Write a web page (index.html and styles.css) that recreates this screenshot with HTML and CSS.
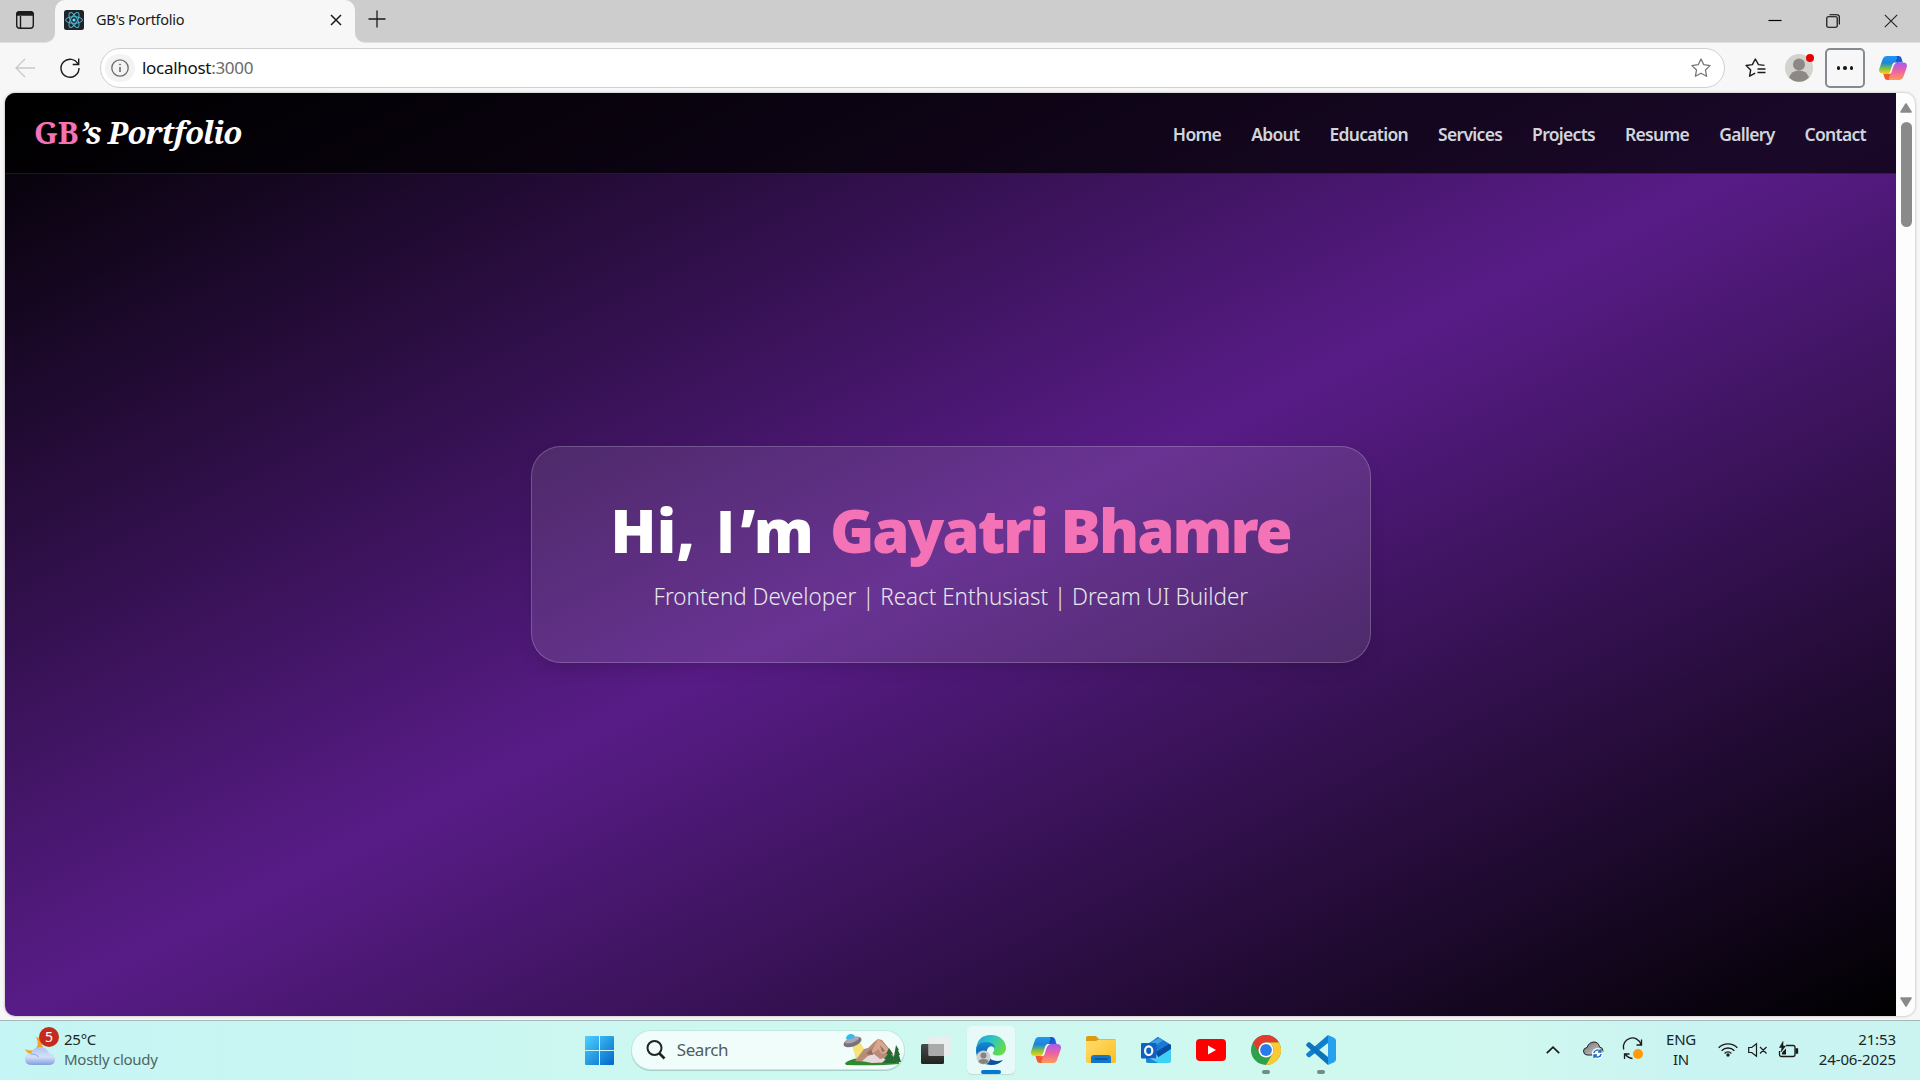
FILE: index.html
```html
<!DOCTYPE html>
<html lang="en">
<head>
<meta charset="utf-8">
<title>GB's Portfolio</title>
<link rel="stylesheet" href="styles.css">
</head>
<body>
<svg width="0" height="0" class="defs" aria-hidden="true">
  <defs>
    <linearGradient id="cpA" x1="0" y1="0" x2="0" y2="1"><stop offset="0" stop-color="#2196f3"/><stop offset=".4" stop-color="#1b86d8"/><stop offset=".7" stop-color="#7cc04b"/><stop offset="1" stop-color="#f5d210"/></linearGradient>
    <linearGradient id="cpB" x1="0" y1="0" x2="0" y2="1"><stop offset="0" stop-color="#a35cf0"/><stop offset=".45" stop-color="#e860a8"/><stop offset="1" stop-color="#ff9a55"/></linearGradient>
    <linearGradient id="cpC" x1="0" y1="0" x2="1" y2="1"><stop offset="0" stop-color="#1a3fc4"/><stop offset="1" stop-color="#1b6fe0"/></linearGradient>
    <linearGradient id="win" gradientUnits="userSpaceOnUse" x1="0" y1="0" x2="29" y2="29"><stop offset="0" stop-color="#4fd0ff"/><stop offset="1" stop-color="#0067c8"/></linearGradient>
    <linearGradient id="edA" x1="0" y1="0" x2="1" y2=".5"><stop offset="0" stop-color="#1b9de2"/><stop offset=".5" stop-color="#2fc3c4"/><stop offset="1" stop-color="#62dc4c"/></linearGradient>
    <linearGradient id="edB" x1="0" y1="0" x2="0" y2="1"><stop offset="0" stop-color="#1488d8"/><stop offset="1" stop-color="#0c4a94"/></linearGradient>
    <linearGradient id="fold" x1="0" y1="0" x2="1" y2="1"><stop offset="0" stop-color="#ffdc72"/><stop offset="1" stop-color="#fcbe1e"/></linearGradient>
    <linearGradient id="cloudG" x1="0" y1="0" x2="0" y2="1"><stop offset="0" stop-color="#a9c4f5"/><stop offset=".55" stop-color="#d5e0f6"/><stop offset="1" stop-color="#7f9fe0"/></linearGradient>
    <linearGradient id="tvA" x1="0" y1="0" x2="0" y2="1"><stop offset="0" stop-color="#4a4a48"/><stop offset="1" stop-color="#222"/></linearGradient>
    <linearGradient id="grayC" x1="0" y1="0" x2="1" y2="1"><stop offset="0" stop-color="#6f6f6f"/><stop offset="1" stop-color="#d8d8d8"/></linearGradient>
    <symbol id="copilot" viewBox="0 0 30 28">
      <path d="M17 1h4q2.500 0 3.200 2.500L25.500 8h-4q-2.500 0-3.200 2.500L14 7z" fill="url(#cpC)"/>
      <path d="M13 27H9q-2.500 0-3.200-2.500L4.500 20h4q2.500 0 3.200-2.500L16 21z" fill="#f4582c"/>
      <path d="M8 1h10q2 0 1.600 2-.6 1-1.200 3l-3.600 11q-1 3-4.300 3H4Q0 20 0 16.500q0-1 .5-2.500L4 4q1-3 4-3z" fill="url(#cpA)"/>
      <path d="M22 27H12q-2 0-1.600-2 .6-1 1.200-3l3.600-11q1-3 4.300-3H26q4 0 4 3.500 0 1-.5 2.500L26 24q-1 3-4 3z" fill="url(#cpB)"/>
      <path d="M16.500 8h3q-3 .8-4 4L13.500 18.500q-.6 1.800-2.500 1.800h-1.500q1.800-.5 2.500-2.800l2.200-7q.8-2.500 2.300-2.500z" fill="#fff" opacity=".9"/>
    </symbol>
  </defs>
</svg>

<div class="desktop">
  <header class="tabstrip">
    <div class="tab-actions">
      <svg width="20" height="20" viewBox="0 0 20 20" fill="none" stroke="#1b1b1b" stroke-width="1.400"><rect x="1.700" y="1.700" width="16.600" height="16.600" rx="3"/><path d="M5.500 6v12"/><path d="M2 5V4q0-2 2-2h12q2 0 2 2v1z" fill="#1b1b1b"/></svg>
    </div>
    <div class="tab">
      <svg width="20" height="20" viewBox="0 0 20 20"><rect width="20" height="20" rx="2.500" fill="#20232a"/><g fill="none" stroke="#4fb9d3" stroke-width="1"><ellipse cx="10" cy="10" rx="8.400" ry="3.300"/><ellipse cx="10" cy="10" rx="8.400" ry="3.300" transform="rotate(60 10 10)"/><ellipse cx="10" cy="10" rx="8.400" ry="3.300" transform="rotate(120 10 10)"/></g><circle cx="10" cy="10" r="1.600" fill="#61dafb"/></svg>
      <span class="tab-title">GB's Portfolio</span>
      <svg class="tab-close" width="12" height="12" viewBox="0 0 12 12" stroke="#1b1b1b" stroke-width="1.500"><path d="M1 1l10 10M11 1L1 11"/></svg>
    </div>
    <svg class="new-tab" width="18" height="18" viewBox="0 0 18 18" stroke="#1b1b1b" stroke-width="1.300"><path d="M9 .5v17M.5 9h17"/></svg>
    <div class="window-controls">
      <svg width="14" height="14" viewBox="0 0 14 14" stroke="#000" stroke-width="1.200"><path d="M.5 6.500h13"/></svg>
      <svg width="14" height="14" viewBox="0 0 14 14" fill="none" stroke="#000" stroke-width="1.100"><rect x=".8" y="2.800" width="10.400" height="10.400" rx="1.200"/><path d="M3.500.8H11q2.300 0 2.300 2.300v7.500"/></svg>
      <svg width="14" height="14" viewBox="0 0 14 14" stroke="#222" stroke-width="1.100"><path d="M.8.8l12.400 12.400M13.200.8L.8 13.200"/></svg>
    </div>
  </header>

  <div class="toolbar">
    <svg class="back" width="20" height="20" viewBox="0 0 20 20" fill="none" stroke="#c9c9c9" stroke-width="1.300"><path d="M20 10H1M10 1L1 10l9 9"/></svg>
    <svg class="reload" width="20" height="20" viewBox="0 0 20 20" fill="none" stroke="#1b1b1b" stroke-width="1.400"><path d="M18.200 6.500A9 9 0 1 0 19 10M18.700.5v6h-6"/></svg>
    <div class="address">
      <span class="site-info"><svg width="18" height="18" viewBox="0 0 18 18" fill="none" stroke="#6b6b6b" stroke-width="1.300"><circle cx="9" cy="9" r="8.200"/><path d="M9 8v5" stroke-width="1.600"/><circle cx="9" cy="5.500" r=".6" fill="#6b6b6b" stroke-width=".8"/></svg></span>
      <span class="url">localhost<span class="port">:3000</span></span>
      <svg class="star" width="20" height="20" viewBox="0 0 20 20" fill="none" stroke="#757575" stroke-width="1.300" stroke-linejoin="round"><path d="M10 1l2.800 5.700 6.300.9-4.600 4.400 1.100 6.300-5.600-3-5.600 3L5.500 12 .9 7.600l6.300-.9z"/></svg>
    </div>
    <svg class="favorites" width="21" height="20" viewBox="0 0 21 20" fill="none" stroke="#1b1b1b" stroke-width="1.400" stroke-linejoin="round"><path d="M19.500 7.400l-6-.8L10.300 1 7.400 6.600l-6.300.9 4.600 4.400-1.100 6.300 5.600-3"/><path d="M12.500 11h8M12.500 14.500h8"/></svg>
    <div class="profile">
      <svg width="28" height="28" viewBox="0 0 28 28"><circle cx="14" cy="14" r="14" fill="#d4d2ce"/><circle cx="14" cy="10.500" r="6" fill="#8b8885"/><path d="M4 23.500a10.500 10 0 0 1 20 0 14 14 0 0 1-20 0z" fill="#8b8885"/></svg>
      <span class="profile-dot"></span>
    </div>
    <div class="more"><i></i><i></i><i></i></div>
    <svg class="copilot-btn" width="28" height="26"><use href="#copilot"/></svg>
  </div>

  <main class="viewport">
    <div class="page">
      <nav class="navbar">
        <div class="logo"><span class="initials">GB</span><em>’s Portfolio</em></div>
        <ul class="links"><li>Home</li><li>About</li><li>Education</li><li>Services</li><li>Projects</li><li>Resume</li><li>Gallery</li><li>Contact</li></ul>
      </nav>
      <section class="hero">
        <div class="card">
          <h1>Hi, <b class="plain-i">I</b>’m <span>Gayatri Bhamre</span></h1>
          <p>Frontend Developer | React Enthusiast | Dream UI Builder</p>
        </div>
      </section>
    </div>
    <div class="scrollbar">
      <svg width="12" height="10" viewBox="0 0 12 10"><path d="M6 1l5 8H1z" fill="#8a8a8a" stroke="#8a8a8a" stroke-width="1.600" stroke-linejoin="round"/></svg>
      <div class="thumb"></div>
      <svg class="down" width="12" height="10" viewBox="0 0 12 10"><path d="M6 9l5-8H1z" fill="#8a8a8a" stroke="#8a8a8a" stroke-width="1.600" stroke-linejoin="round"/></svg>
    </div>
  </main>

  <footer class="taskbar">
    <div class="weather">
      <div class="weather-icon">
        <svg width="32" height="32" viewBox="0 0 32 32"><path d="M12 3q4 8-1 12-4 3-10 0 2 5 7 5l12-3-4-13z" fill="#f6a321"/><path d="M8 31q-7 0-7-6 0-5 6-5.500Q10 13 16 13q7 0 9 6.500 6 .5 6 6 0 5.500-7 5.500z" fill="url(#cloudG)"/><path d="M7 20q5-.5 8 3" fill="none" stroke="#8aa7e6"/></svg>
        <span class="badge">5</span>
      </div>
      <div class="weather-text"><span>25°C</span><span class="condition">Mostly cloudy</span></div>
    </div>

    <div class="apps">
      <div class="app"><svg width="29" height="29" viewBox="0 0 29 29" fill="url(#win)"><path d="M1 0h13v14H0V1q0-1 1-1zM15 0h13q1 0 1 1v13H15zM0 15h14v14H1q-1 0-1-1zM15 15h14v13q0 1-1 1H15z"/></svg></div>
      <div class="search">
        <svg width="20" height="20" viewBox="0 0 20 20" fill="none" stroke="#222" stroke-width="2"><circle cx="8.500" cy="8" r="7"/><path d="M13.500 13.500l5 5" stroke-width="2.600"/></svg>
        <span>Search</span>
        <svg class="scene" width="58" height="32" viewBox="0 0 58 32">
          <path d="M9 11l8-3 7 12-11 5z" fill="#f5e27a"/>
          <path d="M2 29q8-6 18-4 14-3 36 3v2q-20 2-53 1z" fill="#2f8a2f"/>
          <path d="M12 27l9-12 4-1 6-6 4-3 4 1 9 11 6 10-16 2z" fill="#b98c75"/>
          <path d="M35 5l4 3 7 8 5 8-8-5-4 1-4-5-3 3-4 1 4-8z" fill="#d8a78d"/>
          <path d="M19 27l6-5 6-2 6 5 4-1 3 4-15 1z" fill="#e6d8dc"/>
          <path d="M30 21l-2-6-5 5zM39 18l-2-7 5 6z" fill="#8a6f6c"/>
          <path d="M46 14l4 6h-2l4 5h-2l3 4H39l4-4h-2l4-5h-2zM53 11l3 5h-1l2 5h-1l2 7h-8z" fill="#226b35"/>
          <ellipse cx="9.500" cy="8" rx="9.500" ry="4.400" transform="rotate(-20 9.500 8)" fill="#77727f"/>
          <ellipse cx="9" cy="6" rx="7.500" ry="2.600" transform="rotate(-20 9 6)" fill="#aaa5b2"/>
          <path d="M3 5q0-4 4-5 4-.5 5 3-5 3-9 2z" fill="#39b7f0"/>
        </svg>
      </div>
      <div class="app"><svg width="30" height="28" viewBox="0 0 30 28"><rect y="8" width="23" height="20" rx="1.500" fill="url(#tvA)"/><rect x="7.500" y=".5" width="22" height="19.500" rx="1" fill="#ececec" opacity=".96"/><path d="M8 8h15v12H8z" fill="#aaa"/></svg></div>
      <div class="app active"><svg width="30" height="30" viewBox="0 0 30 30">
        <path d="M0 15Q1 0 15 0c9 0 15 6 15 13 0 5-4 7.500-8 7.500-4 0-6-1.500-5-3 3-4 0-8-6-8-6 0-9.500 3-11 5.500z" fill="url(#edA)"/>
        <path d="M0 15q1-8 10-8 8 0 9 6-3-3-6-1-4 3-1 9 4 7 15 4-4 5-12 5Q0 29 0 15z" fill="url(#edB)"/>
        <circle cx="7.500" cy="22.500" r="7" fill="#d0cfcd"/><circle cx="7.500" cy="20.500" r="3" fill="#858280"/><path d="M2.500 27q0-3 5-3t5 3q-5 4-10 0z" fill="#858280"/></svg></div>
      <div class="app"><svg width="30" height="28"><use href="#copilot"/></svg></div>
      <div class="app"><svg width="30" height="28" viewBox="0 0 30 28"><path d="M0 2q0-2 2-2h7q1 0 2 1l2 2h15q2 0 2 2v4H0z" fill="#dc9a0c"/><path d="M0 6q0-1 1-1h9l3-1.500h16q1 0 1 1V25q0 2-2 2H2q-2 0-2-2z" fill="url(#fold)"/><path d="M5 27v-5q0-3 3-3h14q3 0 3 3v5z" fill="#1577c9"/><path d="M9 23h12" stroke="#0b4f96" stroke-width="1.500" stroke-linecap="round"/></svg></div>
      <div class="app"><svg width="30" height="28" viewBox="0 0 30 28"><path d="M5 9L17 1l13 8v10H5z" fill="#1f86db"/><path d="M14 3l3-2 13 8-15 9-6-4z" fill="#1a7ad2"/><path d="M18 2l4 2.500-12 8-3-4z" fill="#3f9fe6"/><path d="M15 16l13-8 2 1v5L17 22z" fill="#0b4ca3"/><path d="M30 13v12q0 2-2 2H7q-2 0-2-2l11-3z" fill="#3fd0f5"/><path d="M5 20l12 7H7q-2 0-2-2z" fill="#1c87d4"/><rect y="7" width="15.500" height="15.500" rx="1" fill="#0f62be"/><ellipse cx="7.700" cy="14.700" rx="3.600" ry="4.300" fill="none" stroke="#fff" stroke-width="2.200"/></svg></div>
      <div class="app"><svg width="30" height="22" viewBox="0 0 30 22"><rect width="30" height="22" rx="4" fill="#f00"/><path d="M12 6.500l8 4.500-8 4.500z" fill="#fff"/></svg></div>
      <div class="app running"><svg width="30" height="30" viewBox="0 0 30 30"><circle cx="15" cy="15" r="15" fill="#2fa04c"/><path d="M2 7.500A15 15 0 0 1 28 7.500H15a7.500 7.500 0 0 0-6.500 11.200z" fill="#e33b2e"/><path d="M28 7.500A15 15 0 0 1 15 30l6.500-11.200A7.500 7.500 0 0 0 21.500 11L15 7.500z" fill="#fcc934"/><circle cx="15" cy="15" r="7.500" fill="#fff"/><circle cx="15" cy="15" r="5.900" fill="#2a7bea"/></svg></div>
      <div class="app running"><svg width="30" height="30" viewBox="0 0 30 30"><path d="M22 0v8L4 22q-1 .8-2 0l-1.500-1.500q-1-1 0-2z" fill="#1180cc"/><path d="M22 30v-8L4 7.500q-1-.8-2 0L.5 9q-1 1 0 2z" fill="#0b74bd"/><path d="M22 0l6 2.800q2 1 2 3v18.400q0 2-2 3L22 30z" fill="#27a0f0"/></svg></div>
    </div>

    <div class="tray">
      <svg class="chevron" width="14" height="8" viewBox="0 0 14 8" fill="none" stroke="#1b1b1b" stroke-width="1.700"><path d="M.8 7.200L7 1.200l6.200 6"/></svg>
      <svg class="onedrive" width="21" height="18" viewBox="0 0 21 18"><path d="M4 14q-3.500-.5-3.500-4Q.5 7 4 6.500 6 1 11 1q4.500 0 5.500 5 3.500.5 3.500 4t-4 4z" fill="url(#grayC)" stroke="#222"/><circle cx="14.500" cy="12.500" r="5.500" fill="#fff"/><path d="M10.800 12a3.800 3.800 0 0 1 6.800-1.500M18.200 13a3.800 3.800 0 0 1-6.800 1.500M18 8v3h-3M11 17v-3h3" fill="none" stroke="#1669c1" stroke-width="1.300"/></svg>
      <svg class="sync" width="20" height="21" viewBox="0 0 20 21" fill="none" stroke="#1b1b1b" stroke-width="1.300"><path d="M.7 10.500A9 9 0 0 1 18 5.500M18.500.5v5.500h-5M1.500 20v-5h5M2 15q3 4 7.500 4.500"/><circle cx="15" cy="15" r="5" fill="#ff9b0a" stroke="none"/></svg>
      <div class="lang"><span>ENG</span><span>IN</span></div>
      <svg class="wifi" width="20" height="15" viewBox="0 0 20 15" fill="none" stroke="#1b1b1b" stroke-width="1.400"><path d="M.7 5.800a13 13 0 0 1 18.600 0M3.600 8.700a9 9 0 0 1 12.800 0M6.600 11.400a5 5 0 0 1 6.800 0"/><circle cx="10" cy="13" r="1.700" fill="#1b1b1b" stroke="none"/></svg>
      <svg class="volume" width="19" height="14" viewBox="0 0 19 14" fill="none" stroke="#1b1b1b" stroke-width="1.200"><path d="M.7 4.500h3L8.500.8v12.400L3.700 9.500h-3zM12 4l6.500 6.500M18.500 4L12 10.500"/></svg>
      <svg class="battery" width="20" height="17" viewBox="0 0 20 17" fill="none" stroke="#1b1b1b" stroke-width="1.300"><path d="M8 4.500h7q2 0 2 2v7q0 2-2 2H3.500q-2 0-2-2V10"/><path d="M18 8v4h1.500V8z" fill="#1b1b1b"/><path d="M5 .5L1.500 6.500H4l-1 4.500 4.500-6H5z" fill="#1b1b1b" stroke-width=".6"/><path d="M4 13.500v-2l4-4v6z" fill="#1b1b1b" stroke="none"/></svg>
      <div class="clock"><span>21:53</span><span>24-06-2025</span></div>
    </div>
  </footer>
</div>
</body>
</html>
```
FILE: styles.css
```css
* { box-sizing: border-box; }
body { margin: 0; font-family: "Noto Sans", "Open Sans", sans-serif; overflow: hidden; background: #f7f7f7; }
svg { display: block; flex: none; overflow: visible; }
.defs { position: absolute; }
.desktop { display: flex; flex-direction: column; width: 1920px; height: 1080px; }

/* Browser chrome */
.tabstrip { display: flex; height: 43px; background: #f7f7f7; flex: none; }
.tab-actions { width: 55px; padding: 10px 0 0 15px; background: #cdcdcd; border-radius: 0 0 10px 0; border-bottom: 1px solid #e0e0e0; }
.tab { display: flex; align-items: center; width: 300px; padding: 0 13px 3px 9px; background: linear-gradient(#cdcdcd 12px, #f7f7f7 12px); position: relative; z-index: 0; }
.tab::before { content: ""; position: absolute; inset: 0; z-index: -1; border-radius: 10px 10px 0 0; background: #f7f7f7; }
.tab-title { margin: -2px 0 0 12px; font-size: 14.5px; letter-spacing: -.3px; color: #1a1a1a; }
.tab-close { margin-left: auto; }
.new-tab, .window-controls { background: #cdcdcd; }
.new-tab { box-sizing: content-box; padding: 10px 0 14px 13px; border-radius: 0 0 0 10px; border-bottom: 1px solid #e0e0e0; }
.window-controls { flex: 1; display: flex; justify-content: flex-end; gap: 44px; padding: 14px 22px 0 0; border-bottom: 1px solid #e0e0e0; }
.toolbar { display: flex; align-items: center; height: 50px; padding: 0 13px 0 15px; flex: none; background: #f7f7f7; }
.reload { margin-left: 25px; }
.address { display: flex; align-items: center; width: 1625px; height: 40px; margin-left: 20px; padding: 0 13px 0 4px; border: 1px solid #cfcfcf; border-radius: 20px; background: #fff; }
.site-info { display: grid; place-items: center; width: 30px; height: 28px; border-radius: 15px; background: #f3f3f3; }
.url { margin: -2px 0 0 7px; font-size: 17px; letter-spacing: -.3px; color: #111; }
.port { color: #6a6a6a; }
.star { margin-left: auto; }
.favorites { margin-left: 20px; }
.profile { position: relative; margin-left: 19px; }
.profile-dot { position: absolute; right: -1px; top: 0; width: 8px; height: 8px; border-radius: 50%; background: #e60000; }
.more { display: flex; align-items: center; justify-content: center; gap: 3px; width: 40px; height: 40px; margin-left: 12px; border: 2px solid #868b92; border-radius: 5px; }
.more i { width: 3.5px; height: 3.5px; border-radius: 50%; background: #1b1b1b; }
.copilot-btn { margin-left: auto; }

/* Web page */
.viewport { display: flex; height: 923px; margin: 0 5px; flex: none; border-radius: 10px; overflow: hidden; background: #fdfdfd; box-shadow: 0 0 3px rgba(0, 0, 0, .3); }
.page { display: flex; flex-direction: column; width: 1891px; background: linear-gradient(to bottom right, #000, #581c87, #000); }
.navbar { display: flex; align-items: center; justify-content: space-between; height: 81px; padding: 0 30px; background: rgba(0, 0, 0, .7); border-bottom: 1px solid rgba(255, 255, 255, .1); }
.logo { display: flex; align-items: baseline; gap: 1px; margin: -3px 0 0 -1px; font: 700 31px "Noto Serif", "Liberation Serif", serif; color: #fff; }
.logo em { letter-spacing: -1px; }
.initials { color: #f472b6; }
.links { display: flex; gap: 30px; margin: 2px 0 0; padding: 0; list-style: none; font-size: 17.5px; font-weight: 600; letter-spacing: -.7px; color: #d1d5db; }
.hero { flex: 1; display: flex; align-items: center; justify-content: center; padding-bottom: 82px; }
.card { display: flex; flex-direction: column; align-items: center; width: 840px; height: 217px; padding-top: 46px; border: 1px solid rgba(255, 255, 255, .2); border-radius: 30px; background: rgba(255, 255, 255, .1); box-shadow: 0 8px 20px -6px rgba(0, 0, 0, .18); }
.card h1 { margin: 0; font-size: 60px; font-weight: 900; line-height: 75px; letter-spacing: .3px; color: #fff; white-space: nowrap; }
.card h1 span { color: #f472b6; letter-spacing: -2px; }
.plain-i { display: inline-block; width: 29px; font-family: Roboto, sans-serif; font-weight: 900; line-height: 1; text-align: center; }
.card p { margin: 8px 0 0; font-size: 24.5px; font-weight: 300; line-height: 40px; color: #e5e7eb; white-space: nowrap; transform: scaleX(.915); }
.scrollbar { display: flex; flex-direction: column; align-items: center; flex: 1; padding: 10px 0 9px 1px; }
.thumb { width: 11px; height: 105px; margin-top: 9px; border-radius: 6px; background: #8a8a8a; }
.down { margin-top: auto; }

/* Taskbar */
.taskbar { display: grid; grid-template-columns: 1fr auto 1fr; align-items: start; height: 60px; margin-top: 4px; border-top: 1px solid #a5b7b6; background: linear-gradient(90deg, #c5f5f4, #cdf8f0 35%, #d0f8ef 78%, #caf4f2 88%, #cbf4f1); color: #1b2626; font-size: 15px; line-height: 20px; }
.weather { display: flex; align-items: center; height: 55px; padding-left: 24px; }
.weather-icon { position: relative; }
.badge { position: absolute; left: 15px; top: -5px; width: 20px; height: 20px; border-radius: 50%; background: #c42b1c; color: #fff; font-size: 14px; line-height: 19px; text-align: center; }
.weather-icon svg { margin-top: 2px; }
.weather-text { display: flex; flex-direction: column; margin-left: 8px; letter-spacing: -.25px; }
.condition { color: #4e6563; }
.apps { display: flex; align-items: center; height: 58px; }
.app { display: grid; place-items: center; position: relative; width: 55px; height: 48px; }
.search { display: flex; align-items: center; width: 272px; height: 38px; margin: 0 4.5px 0 5px; padding: 0 3px 0 14px; border-radius: 19px; background: #f1fdfb; box-shadow: 0 0 0 1px #c3e9e3, 0 1px 0 1px #aacfca; font-size: 17px; letter-spacing: -.4px; color: #4f5c5b; }
.search span { margin-left: 11px; }
.scene { margin-left: auto; }
.app.active::before { content: ""; position: absolute; inset: 0 3.5px; z-index: 0; border-radius: 5px; background: #e7faf7; box-shadow: 0 1px 1px #b9ddd9; }
.app svg { position: relative; }
.app::after { position: absolute; bottom: 0; height: 4px; border-radius: 2px; }
.app.active::after { content: ""; width: 20px; background: #0078d4; }
.app.running::after { content: ""; width: 8px; background: #728c88; }
.tray { display: flex; align-items: center; justify-content: flex-end; height: 57px; padding-right: 24px; }
.onedrive { margin-left: 23px; }
.sync { margin-left: 19px; }
.lang, .clock { display: flex; flex-direction: column; margin-top: -2px; }
.lang { align-items: center; width: 30px; margin-left: 23px; letter-spacing: -.3px; }
.wifi { margin-left: 22px; }
.volume { margin-left: 10px; }
.battery { margin-left: 11px; }
.clock { align-items: flex-end; width: 78px; margin-left: 20px; letter-spacing: -.1px; }
```
